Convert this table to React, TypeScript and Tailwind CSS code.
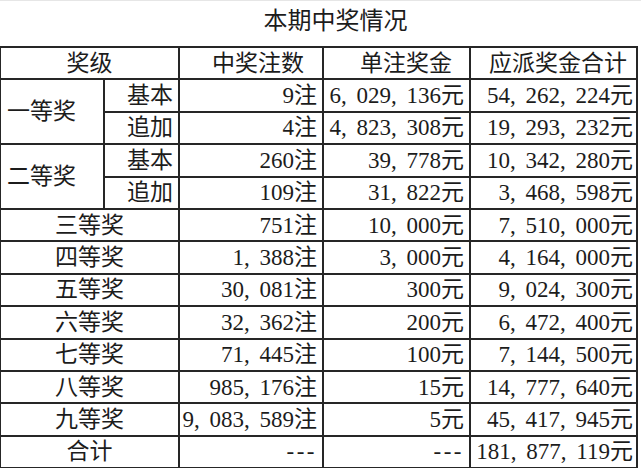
import React from 'react';

type Row = {
  label: string;
  sub?: string;
  span?: number;
  count: string;
  unit: string;
  total: string;
};

const rows: Row[] = [
  { label: '一等奖', sub: '基本', span: 2, count: '9注', unit: '6,029,136元', total: '54,262,224元' },
  { label: '', sub: '追加', count: '4注', unit: '4,823,308元', total: '19,293,232元' },
  { label: '二等奖', sub: '基本', span: 2, count: '260注', unit: '39,778元', total: '10,342,280元' },
  { label: '', sub: '追加', count: '109注', unit: '31,822元', total: '3,468,598元' },
  { label: '三等奖', count: '751注', unit: '10,000元', total: '7,510,000元' },
  { label: '四等奖', count: '1,388注', unit: '3,000元', total: '4,164,000元' },
  { label: '五等奖', count: '30,081注', unit: '300元', total: '9,024,300元' },
  { label: '六等奖', count: '32,362注', unit: '200元', total: '6,472,400元' },
  { label: '七等奖', count: '71,445注', unit: '100元', total: '7,144,500元' },
  { label: '八等奖', count: '985,176注', unit: '15元', total: '14,777,640元' },
  { label: '九等奖', count: '9,083,589注', unit: '5元', total: '45,417,945元' },
  { label: '合计', count: '---', unit: '---', total: '181,877,119元' },
];

// 逗号在原图里是宽一些的半角
function Num({ v }: { v: string }) {
  if (v === '---') return <span className="tracking-[2.5px]">---</span>;
  const parts = v.split(',');
  return (
    <>
      {parts.map((p, i) => (
        <React.Fragment key={i}>
          {i > 0 && <span className="inline-block w-[15.5px] text-left">,</span>}
          {p}
        </React.Fragment>
      ))}
    </>
  );
}

const cell = 'border-2 border-[#262626] h-[32.4px] p-0 leading-none whitespace-nowrap';

export default function App() {
  return (
    <div
      className="w-[641px] h-[468px] bg-white text-[#1c1c1c] overflow-hidden border-t border-[#e6e6e6]"
      style={{ fontFamily: "'Liberation Serif', 'Noto Sans CJK SC', serif" }}
    >
      <div className="h-[45px] flex items-center justify-center pl-[30px] pb-[6px] text-[24px]">
        本期中奖情况
      </div>
      <table className="table-fixed border-collapse w-[637px] -ml-px text-[23px]">
        <colgroup>
          <col className="w-[104px]" />
          <col className="w-[75px]" />
          <col className="w-[144px]" />
          <col className="w-[147px]" />
          <col className="w-[167px]" />
        </colgroup>
        <thead>
          <tr>
            <th colSpan={2} className={clsxs(cell, 'font-normal text-center')}>奖级</th>
            <th className={clsxs(cell, 'font-normal text-right pr-[18px]')}>中奖注数</th>
            <th className={clsxs(cell, 'font-normal text-right pr-[17px]')}>单注奖金</th>
            <th className={clsxs(cell, 'font-normal text-right pr-[9px]')}>应派奖金合计</th>
          </tr>
        </thead>
        <tbody>
          {rows.map((r, i) => (
            <tr key={i}>
              {r.sub ? (
                <>
                  {r.span && (
                    <td rowSpan={r.span} className={clsxs(cell, 'text-left pl-[6px]')}>
                      {r.label}
                    </td>
                  )}
                  <td className={clsxs(cell, 'text-right pr-[5px]')}>{r.sub}</td>
                </>
              ) : (
                <td colSpan={2} className={clsxs(cell, 'text-center')}>{r.label}</td>
              )}
              <td className={clsxs(cell, 'text-right pr-[5px]')}><Num v={r.count} /></td>
              <td className={clsxs(cell, 'text-right pr-[5px]')}><Num v={r.unit} /></td>
              <td className={clsxs(cell, 'text-right pr-[3px]')}><Num v={r.total} /></td>
            </tr>
          ))}
        </tbody>
      </table>
    </div>
  );
}

function clsxs(...c: string[]) {
  return c.join(' ');
}
